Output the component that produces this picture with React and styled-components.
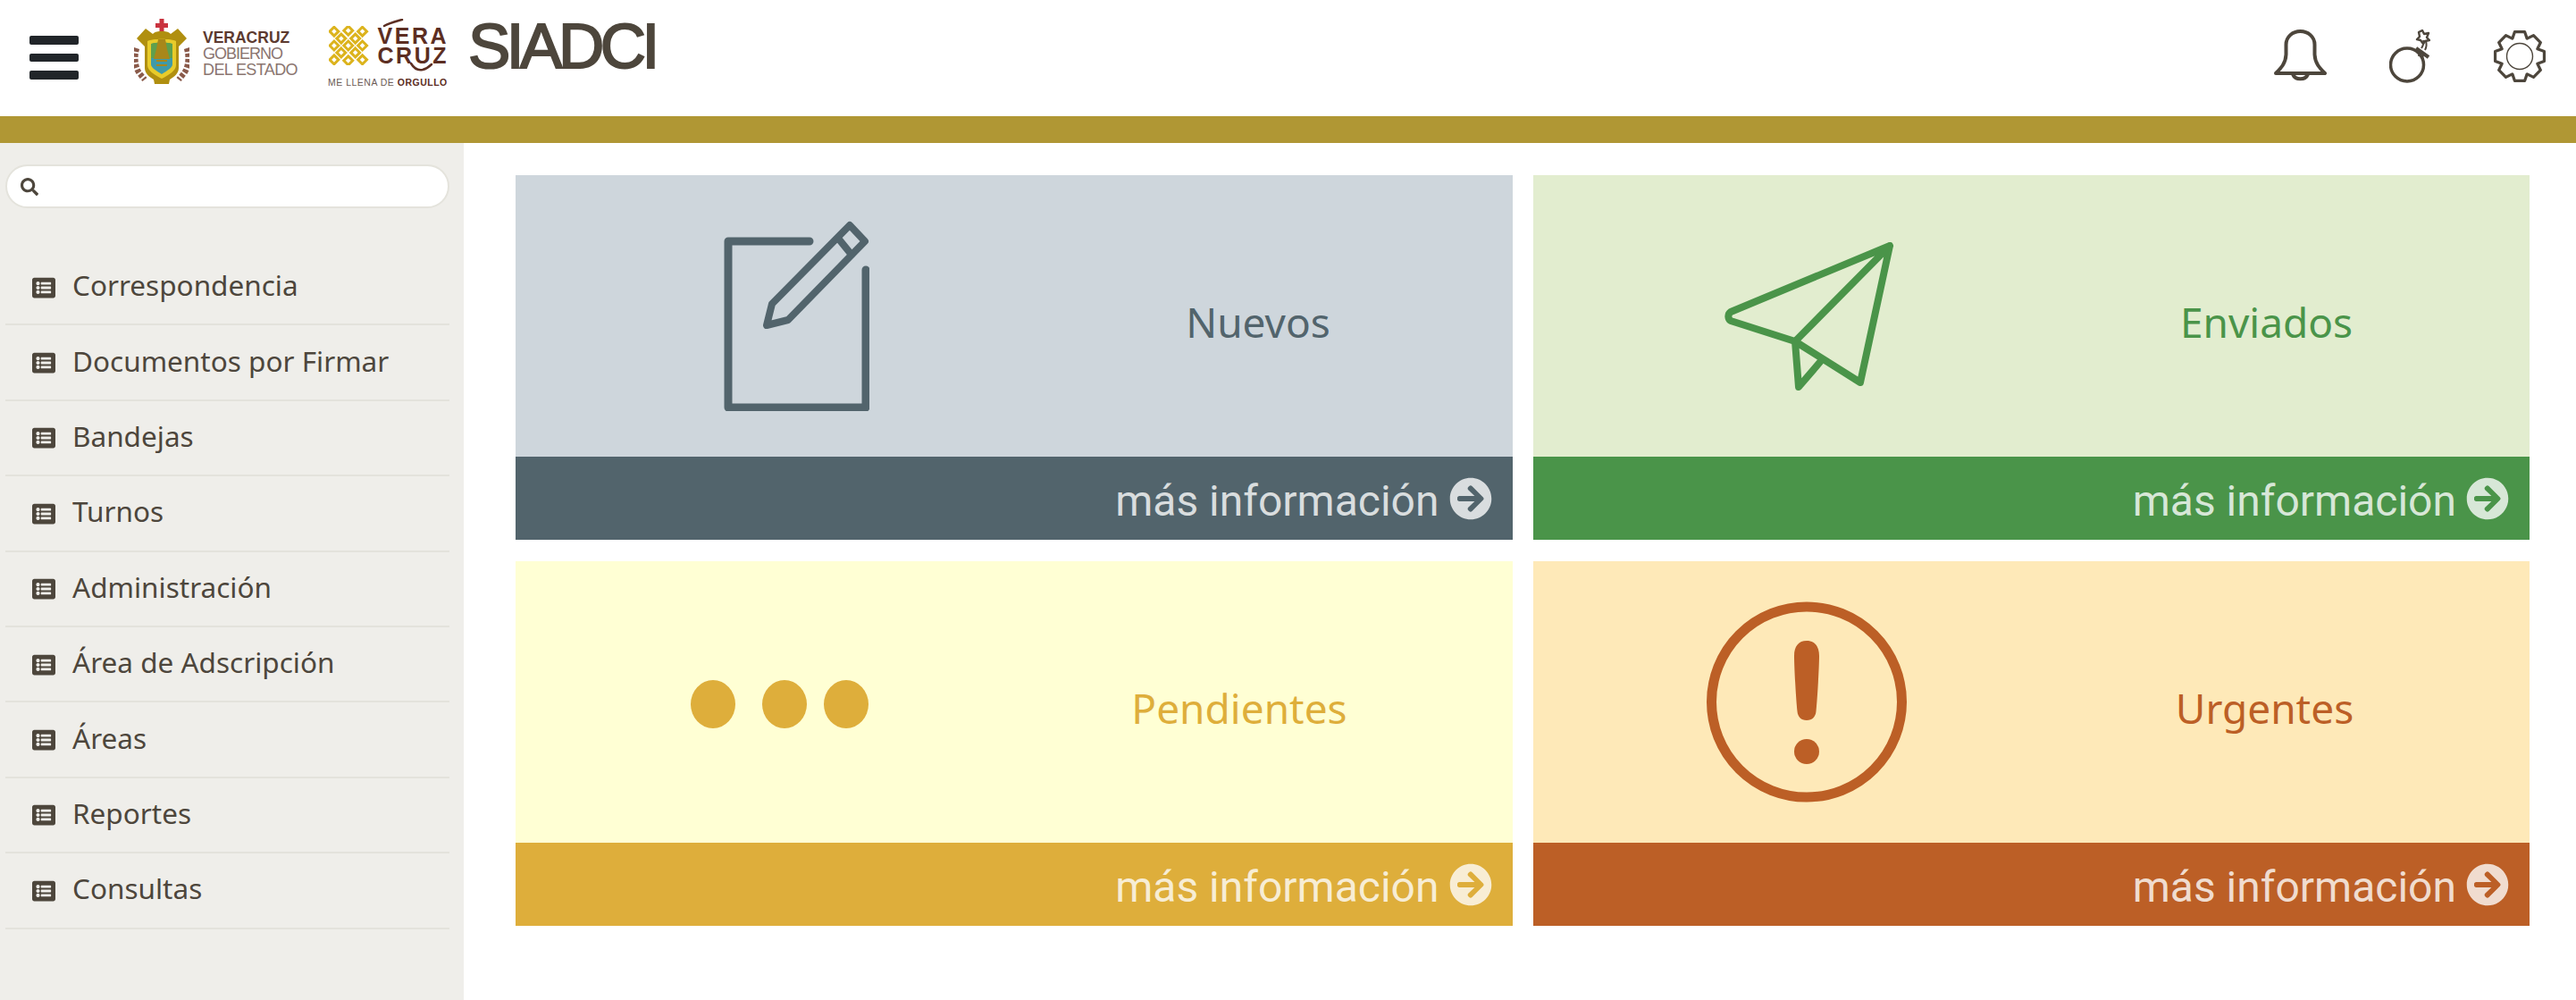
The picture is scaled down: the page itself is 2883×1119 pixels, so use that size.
import React from "react";
import styled, { createGlobalStyle } from "styled-components";
import { FaArrowCircleRight, FaListAlt, FaSearch } from "react-icons/fa";

const GlobalStyle = createGlobalStyle`
  body {
    margin: 0;
    background: #fff;
    font-family: "Noto Sans", sans-serif;
  }
`;

const menuItems = [
  "Correspondencia",
  "Documentos por Firmar",
  "Bandejas",
  "Turnos",
  "Administración",
  "Área de Adscripción",
  "Áreas",
  "Reportes",
  "Consultas",
];

// teeth of the settings icon, computed instead of typing 32 points by hand
function gearPath() {
  const points = [];
  for (let i = 0; i < 8; i++) {
    const mid = (i * Math.PI) / 4 - Math.PI / 2;
    [
      [-0.39, 21.5],
      [-0.2, 28],
      [0.2, 28],
      [0.39, 21.5],
    ].forEach(([offset, radius]) => {
      const a = mid + offset;
      points.push(`${(30 + radius * Math.cos(a)).toFixed(2)} ${(30 + radius * Math.sin(a)).toFixed(2)}`);
    });
  }
  return `M${points.join("L")}Z`;
}

function PatternLogo() {
  const diamonds = [
    [6, 6], [22, 5], [38, 6],
    [14, 14], [30, 14],
    [6, 22], [22, 22], [38, 22],
    [14, 30], [30, 30],
    [6, 38], [22, 39], [38, 38],
  ];
  return (
    <svg width="45" height="44" viewBox="0 0 45 44">
      {diamonds.map(([x, y]) => (
        <path
          key={`${x}-${y}`}
          d={`M${x} ${y - 5}L${x + 5} ${y}L${x} ${y + 5}L${x - 5} ${y}Z`}
          fill="none"
          stroke="#dcb31c"
          strokeWidth="3"
        />
      ))}
    </svg>
  );
}

function Crest() {
  return (
    <svg width="62" height="75" viewBox="0 0 62 75">
      <path d="M3 33C0 42 1 54 6 61L12 68M59 33C62 42 61 54 56 61L50 68" fill="none" stroke="#8a5a4a" strokeWidth="6.500" strokeDasharray="4 2" />
      <path d="M28.500 0h5v5h4.500v5h-4.500v9h-5v-9H24V5h4.500z" fill="#c9333f" />
      <path d="M3 22l10-11 8 6c3-3 6-3 10-3s7 0 10 3l8-6 10 11-9 9v24c0 6-5 10-10 13l-1 5h-16l-1-5c-5-3-10-7-10-13V31z" fill="#b08f10" />
      <path d="M15 25c5-3 27-3 32 0v27c0 6-8 11-16 15-8-4-16-9-16-15z" fill="#e8cb2a" />
      <path d="M19 28c4-2 20-2 24 0v16H19z" fill="#5fa04d" />
      <path d="M19 44h24v7c0 4-6 7-12 11-6-4-12-7-12-11z" fill="#3f9aa8" />
      <path d="M27 23h8l2 11 3 11H22l3-11z" fill="#a8871a" />
      <path d="M25 47h12M25 52h12" stroke="#a8871a" strokeWidth="2" />
    </svg>
  );
}

function BellIcon() {
  return (
    <svg width="59" height="60" viewBox="0 0 59 60" fill="none" stroke="#4d463c" strokeWidth="4" strokeLinejoin="round">
      <path d="M2 49C8 43 13 38 13.500 28V17C13.500 8 21 2 29.500 2S45.500 8 45.500 17V28C46 38 51 43 57 49Z" />
      <path d="M21 50A9 8 0 0 0 38 50" />
    </svg>
  );
}

function BombIcon() {
  return (
    <svg width="46" height="60" viewBox="0 0 46 60" fill="none" stroke="#4d463c" strokeWidth="3.500">
      <circle cx="20" cy="39.500" r="18.500" />
      <path d="M30 21L44 31" strokeWidth="4" />
      <path d="M34 25L33 30M38 28L37 33M36 21C38 18 39 15 38 12M40 23C42 19 42 16 41 13" strokeWidth="2" />
      <path d="M37 1l2 4 5-1-2 5 3 3-5 1-2 3-3-4-4-1 3-3-1-5z" strokeWidth="2.400" strokeLinejoin="round" />
    </svg>
  );
}

function GearIcon() {
  return (
    <svg width="60" height="60" viewBox="0 0 60 60" fill="none" stroke="#4d463c">
      <path d={gearPath()} strokeWidth="3.200" strokeLinejoin="round" />
      <circle cx="30" cy="30" r="14.500" strokeWidth="1.400" />
    </svg>
  );
}

function WriteIcon({ color }) {
  return (
    <svg width="163" height="213" viewBox="241 57 163 213" fill="none" stroke={color} strokeLinecap="round" strokeLinejoin="round">
      <path d="M337 80H246V266H400V112" strokeWidth="9" />
      <path d="M382 62L399 80L313 168L289 174L295 150Z" strokeWidth="8" />
      <path d="M371 79L384 95" strokeWidth="8" />
    </svg>
  );
}

function PlaneIcon({ color }) {
  return (
    <svg width="191" height="166" viewBox="230 81 191 166" fill="none" stroke={color} strokeWidth="8" strokeLinecap="round" strokeLinejoin="round">
      <path d="M416 85L238 159C234 162 235 167 238 169L310 192L416 85L383 238L310 192L314 243L338 215" />
    </svg>
  );
}

function DotsIcon({ color }) {
  return (
    <svg width="199" height="59" viewBox="0 -5 199 59" fill={color}>
      <ellipse cx="25" cy="27" rx="25" ry="27" />
      <ellipse cx="105" cy="27" rx="25" ry="27" />
      <ellipse cx="174" cy="27" rx="25" ry="27" />
    </svg>
  );
}

function AlertIcon({ color }) {
  return (
    <svg width="224" height="225" viewBox="0 0 224 225" fill="none">
      <circle cx="112" cy="112.500" r="106.500" stroke={color} strokeWidth="11" />
      <path d="M112 44c9 0 14 6 14 17 0 12-2 48-3.500 62-.6 6-4 10-10.500 10s-9.900-4-10.500-10C100 109 98 73 98 61c0-11 5-17 14-17z" fill={color} />
      <circle cx="112" cy="168" r="14" fill={color} />
    </svg>
  );
}

const cards = [
  { title: "Nuevos", icon: WriteIcon, light: "#ced6dc", dark: "#52646c", iconCol: 628, titleCenter: 831 },
  { title: "Enviados", icon: PlaneIcon, light: "#e2edcf", dark: "#4a9449", iconCol: 618, titleCenter: 821 },
  { title: "Pendientes", icon: DotsIcon, light: "#ffffd4", dark: "#deae3b", iconCol: 591, titleCenter: 810 },
  { title: "Urgentes", icon: AlertIcon, light: "#fee9b8", dark: "#bc5f26", iconCol: 612, titleCenter: 819 },
];

export default function App() {
  return (
    <Page>
      <GlobalStyle />
      <Header>
        <Burger>
          <span />
          <span />
          <span />
        </Burger>
        <GovLogo>
          <Crest />
          <GovText>
            <strong>VERACRUZ</strong>
            <span>GOBIERNO</span>
            <span className="wide">DEL ESTADO</span>
          </GovText>
        </GovLogo>
        <VeraLogo>
          <VeraTop>
            <PatternLogo />
            <VeraWords>
              <span>VERA</span>
              <span>CRUZ</span>
            </VeraWords>
            <Swash width="80" height="60" viewBox="0 0 80 60" fill="none" stroke="#5c2e22" strokeWidth="2.500" strokeLinecap="round">
              <path d="M7 8C12 5 20 3 27 1" />
              <path d="M37 50C40 55 45 58 50 57C54 56 57 54 60 51" />
            </Swash>
          </VeraTop>
          <Tagline>
            ME LLENA DE <b>ORGULLO</b>
          </Tagline>
        </VeraLogo>
        <AppName>SIADCI</AppName>
        <HeaderIcons>
          <BellIcon />
          <BombIcon />
          <GearIcon />
        </HeaderIcons>
      </Header>
      <GoldBar />
      <Body>
        <Sidebar>
          <SearchBox>
            <FaSearch />
          </SearchBox>
          <Menu>
            {menuItems.map((item) => (
              <MenuItem key={item}>
                <FaListAlt />
                <span>{item}</span>
              </MenuItem>
            ))}
          </Menu>
        </Sidebar>
        <Main>
          {cards.map(({ title, icon: Icon, light, dark, iconCol, titleCenter }) => (
            <Card key={title}>
              <CardBody $bg={light} $iconCol={iconCol} $titleCol={2 * (titleCenter - iconCol)}>
                <IconCell>
                  <Icon color={dark} />
                </IconCell>
                <CardTitle $color={dark}>{title}</CardTitle>
              </CardBody>
              <CardLink $bg={dark}>
                <span>más información</span>
                <FaArrowCircleRight />
              </CardLink>
            </Card>
          ))}
        </Main>
      </Body>
    </Page>
  );
}

const Page = styled.div`
  width: 2883px;
  min-height: 1119px;
  display: flex;
  flex-direction: column;
  overflow: hidden;
`;

const Header = styled.header`
  height: 130px;
  display: flex;
  align-items: flex-start;
  padding: 0 33px;
  box-sizing: border-box;
  background: #fff;
`;

const Burger = styled.div`
  width: 55px;
  margin-top: 40px;
  display: flex;
  flex-direction: column;
  gap: 10px;
  span {
    height: 9.500px;
    border-radius: 2px;
    background: #212529;
  }
`;

const GovLogo = styled.div`
  display: flex;
  align-items: center;
  gap: 15px;
  margin: 21px 0 0 62px;
`;

const GovText = styled.div`
  display: flex;
  flex-direction: column;
  width: 104px;
  padding-top: 2px;
  font-family: "Liberation Sans", sans-serif;
  font-size: 18px;
  line-height: 18px;
  color: #8a7570;
  white-space: nowrap;
  strong {
    color: #5c3a30;
    font-size: 17.500px;
  }
  span {
    letter-spacing: -1px;
  }
  .wide {
    letter-spacing: -0.6px;
  }
`;

const VeraLogo = styled.div`
  width: 135px;
  margin: 21px 0 0 36px;
  display: flex;
  flex-direction: column;
`;

const VeraTop = styled.div`
  position: relative;
  display: flex;
  align-items: center;
  gap: 10px;
  height: 58px;
  padding: 2px 0 0 1px;
  box-sizing: border-box;
`;

const VeraWords = styled.div`
  display: flex;
  flex-direction: column;
  font-family: "Liberation Sans", sans-serif;
  font-weight: 700;
  font-size: 25px;
  line-height: 22px;
  letter-spacing: 2.500px;
  color: #5c2e22;
`;

const Swash = styled.svg`
  position: absolute;
  left: 56px;
  top: 0;
`;

const Tagline = styled.div`
  margin-top: 7px;
  font-family: "Liberation Sans", sans-serif;
  font-size: 10.500px;
  line-height: 12px;
  letter-spacing: 0.5px;
  color: #6b5a55;
  white-space: nowrap;
  b {
    color: #5c2e22;
  }
`;

const AppName = styled.div`
  margin: 26px 0 0 22px;
  width: 215px;
  height: 51px;
  font-family: "Liberation Sans", sans-serif;
  font-size: 71px;
  line-height: 51px;
  letter-spacing: -4.500px;
  color: #4d463c;
  -webkit-text-stroke: 2px #4d463c;
  white-space: nowrap;
`;

const HeaderIcons = styled.div`
  margin: 33px 0 0 auto;
  display: flex;
  gap: 70px;
`;

const GoldBar = styled.div`
  height: 30px;
  background: #b09734;
`;

const Body = styled.div`
  flex: 1;
  display: flex;
`;

const Sidebar = styled.aside`
  width: 519px;
  flex: none;
  box-sizing: border-box;
  padding: 24px 16px 0 6px;
  background: #efeeea;
`;

const SearchBox = styled.div`
  height: 49px;
  padding-left: 15px;
  display: flex;
  align-items: center;
  box-sizing: border-box;
  border: 2px solid #e4e3dc;
  border-radius: 25px;
  background: #fff;
  color: #4d463c;
  font-size: 20px;
`;

const Menu = styled.nav`
  margin-top: 47px;
  display: flex;
  flex-direction: column;
`;

const MenuItem = styled.div`
  height: 84.400px;
  box-sizing: border-box;
  display: flex;
  align-items: center;
  gap: 19px;
  padding: 0 0 2px 30px;
  border-bottom: 2px solid #e3e2dc;
  color: #4d463c;
  font-size: 31.500px;
  span {
    margin-bottom: 3px;
  }
  svg {
    font-size: 26px;
    flex: none;
    margin-top: 3px;
  }
`;

const Main = styled.main`
  flex: 1;
  box-sizing: border-box;
  padding: 36px 52px 0 58px;
  display: grid;
  grid-template-columns: 1fr 1fr;
  grid-auto-rows: 408px;
  column-gap: 23px;
  row-gap: 24px;
  align-content: start;
`;

const Card = styled.article`
  display: flex;
  flex-direction: column;
`;

const CardBody = styled.div`
  flex: 1;
  display: grid;
  grid-template-columns: ${(p) => p.$iconCol}px ${(p) => p.$titleCol}px;
  background: ${(p) => p.$bg};
`;

const IconCell = styled.div`
  display: flex;
  align-items: center;
  justify-content: center;
`;

const CardTitle = styled.div`
  display: flex;
  align-items: center;
  justify-content: center;
  padding-top: 12px;
  box-sizing: border-box;
  font-size: 46px;
  color: ${(p) => p.$color};
`;

const CardLink = styled.div`
  height: 93px;
  display: flex;
  align-items: center;
  justify-content: flex-end;
  gap: 11px;
  padding-right: 23px;
  background: ${(p) => p.$bg};
  color: rgba(255, 255, 255, 0.78);
  font-family: Roboto, sans-serif;
  font-size: 48px;
  span {
    padding-top: 6px;
  }
  svg {
    font-size: 48px;
  }
`;
